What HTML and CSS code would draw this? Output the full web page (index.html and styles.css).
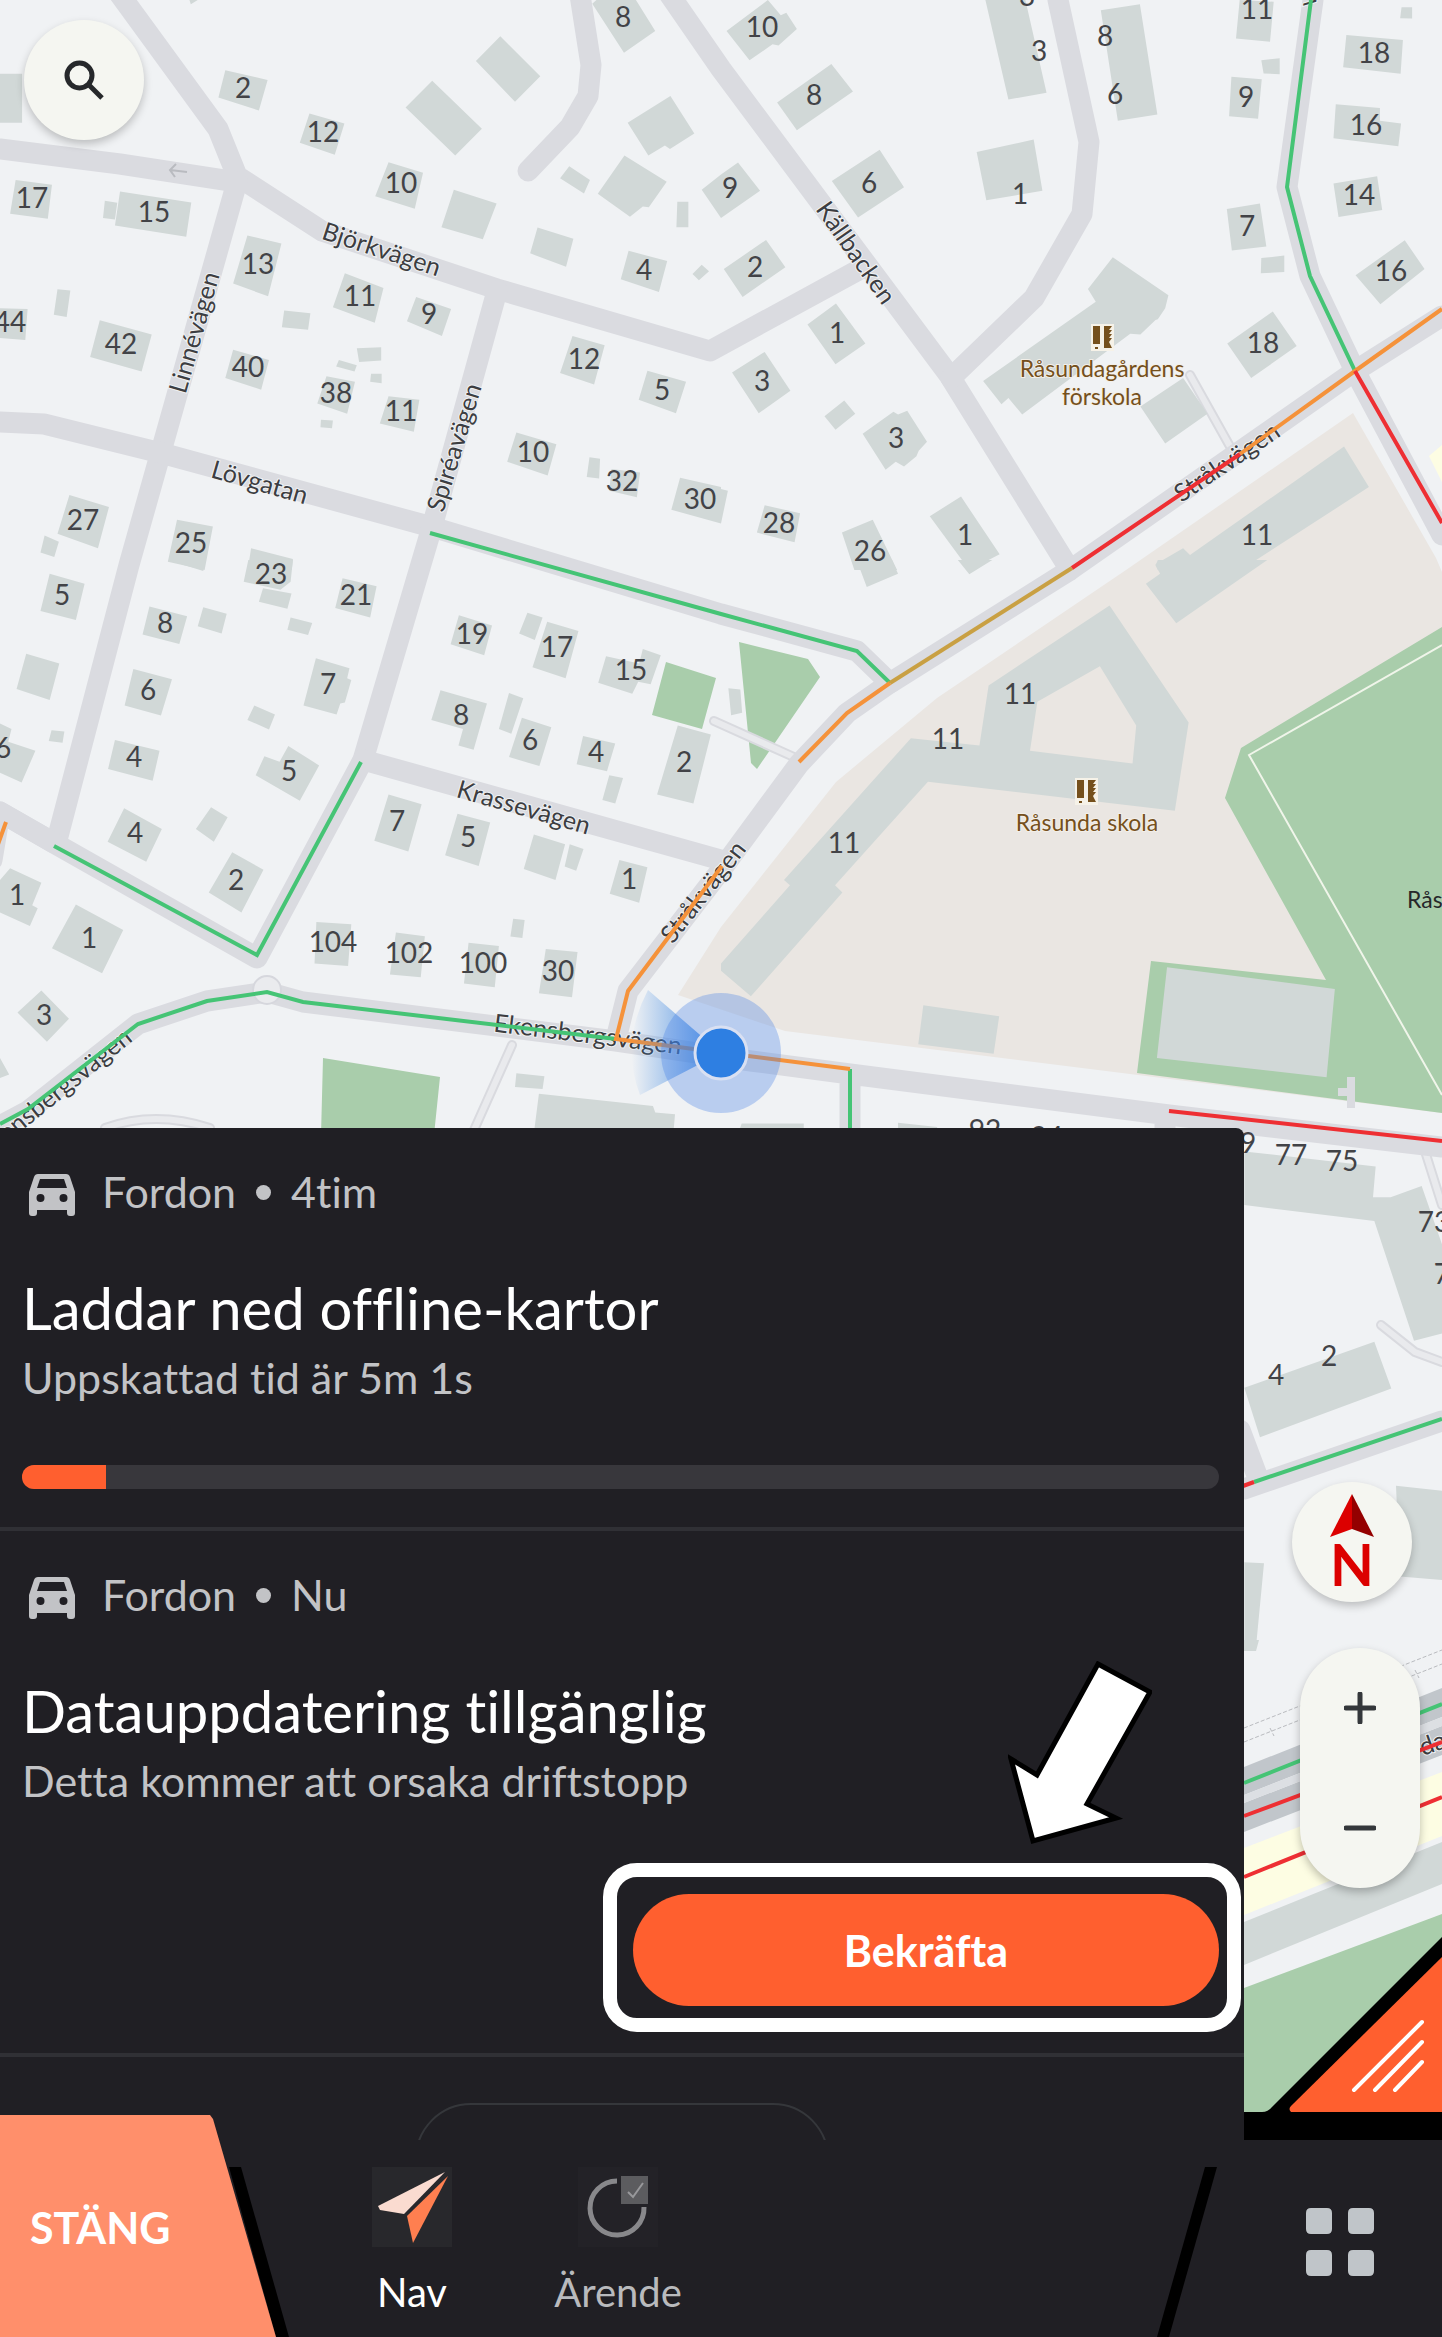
FILE: index.html
```html
<!DOCTYPE html>
<html lang="sv">
<head>
<meta charset="utf-8">
<meta name="viewport" content="width=device-width, initial-scale=1">
<title>Nav</title>
<link rel="stylesheet" href="styles.css">
</head>
<body>
<div class="app">
<main class="stage">
<svg class="map" viewBox="0 0 1442 2112" preserveAspectRatio="xMinYMin slice" role="img" aria-label="Karta">
  <defs>
    <linearGradient id="beam" x1="1" x2="0" y1="0" y2="0"><stop offset="0" stop-color="#2f7fe0" stop-opacity=".9"/><stop offset="1" stop-color="#2f7fe0" stop-opacity="0"/></linearGradient>
  </defs>
  <!-- land use -->
  <path class="school" d="M1353 413L1436 558L1442 572V1113L785 1031L678 995L721 927L836 782L937 698L1126 570Z"/>
  <path class="park" d="M1442 627L1241 748L1225 798L1326 980L1151 961L1137 1073L1442 1113Z"/>
  <path class="park" d="M323 1058L440 1077L434 1135H321ZM739 642L808 659L820 677L757 769L751 763ZM666 662L716 678L702 729L652 715Z"/>
  <path class="park" d="M1244 1988L1442 1914V2112H1244Z"/>
  <path class="yellow" d="M1442 445L1429 456L1442 482ZM1244 1848L1442 1772V1836L1244 1915Z"/>
  <path class="pitchline" d="M1442 645L1249 755L1442 1095"/>
  <!-- footpaths -->
  <path class="path-edge" d="M714 721L796 758M512 1045L474 1130M1190 375L1232 450M105 1128Q155 1110 210 1128M1381 1325L1415 1352L1442 1362M1424 1148L1442 1205"/>
  <path class="path-fill" d="M714 721L796 758M512 1045L474 1130M1190 375L1232 450M105 1128Q155 1110 210 1128M1381 1325L1415 1352L1442 1362M1424 1148L1442 1205"/>
  <path class="road narrow" d="M1351 1077V1108M1338 1092H1350"/>
  <!-- streets -->
  <g class="road">
    <path d="M118 -8L218 129L237 176L322 231L497 289L710 351L864 267"/>
    <path d="M0 149L120 164L237 182L129 565L57 840"/>
    <path d="M0 422L44 424L161 453L432 527L721 614L857 651L890 683"/>
    <path d="M497 291L432 527L363 760L257 958L54 843L0 812"/>
    <path d="M54 843L0 812L-8 860M363 760L721 860"/>
    <path d="M580 -5L591 65L588 96L570 127L528 171"/>
    <path d="M665 -12L721 69L949 375L1070 570"/>
    <path d="M1058 0L1089 142L1082 214L1034 298L951 378"/>
    <path d="M1313 0L1287 187L1310 276L1355 371L1442 535"/>
    <path d="M1442 316L1355 371L1070 570L890 683L847 713L799 764L721 870L628 991L616 1039"/>
    <path d="M0 1126L28 1111L138 1024L207 1001L267 992L303 1002L616 1041L751 1061L850 1074L1169 1115L1442 1147M850 1074V1135M1165 1115V1135"/>
    <path d="M1244 1489L1442 1421M1240 1430L1258 1478"/>
  </g>
  <circle class="roundabout" cx="267" cy="990" r="14"/>
  <!-- railway -->
  <path class="rail-band" d="M1244 1767L1442 1688V1717L1244 1795ZM1244 1803L1442 1726V1755L1244 1832Z"/>
  <path class="rail-gap" d="M1244 1795L1442 1717V1726L1244 1803Z"/>
  <path class="rail-dash" d="M1244 1728L1442 1650M1244 1742L1442 1664M1270 1728L1274 1736M1415 1670L1419 1678"/>
  <!-- buildings, one nested sheet per map tile -->
  <svg class="buildings" width="721" height="570" viewBox="0 0 1568 1568" preserveAspectRatio="none"><path d="M0 203H48V338H0ZM412 0H430L415 12ZM490 193L582 220L563 304L475 268ZM673 312L749 340L728 426L652 393ZM845 446L920 475L902 574L816 540ZM987 522L1080 560L1050 658L960 625ZM940 222L1048 354L990 428L882 296ZM1088 100L1175 210L1120 280L1035 168ZM1297 0H1383L1425 85L1357 145L1288 10ZM1458 264L1510 367L1457 410L1446 400L1410 428L1365 338ZM1358 428L1450 500L1411 570L1398 568L1370 596L1300 533ZM1238 457L1283 495L1270 532L1218 490ZM1473 555H1497V625H1471ZM1568 480L1526 522L1568 600ZM1169 626L1247 657L1231 734L1153 697ZM1367 690L1451 718L1433 803L1350 768ZM1526 728L1542 746L1520 771L1506 754ZM34 495L113 508L104 602L22 588ZM261 527L416 557L405 651L250 620ZM228 552L255 558L250 604L224 600ZM538 648L612 670L583 815L507 780ZM750 752L834 792L815 888L724 845ZM905 817L981 850L961 924L885 884ZM125 796L153 799L145 872L117 866ZM0 848L60 850L55 935L0 930ZM217 881L330 920L308 1022L196 982ZM618 854L675 862L670 907L613 900ZM507 962L585 990L568 1072L490 1040ZM776 958L829 955V992L781 996ZM737 990L776 1005L771 1022L731 1008ZM807 1028H830V1054L805 1050ZM710 1035L772 1050L755 1138L690 1110ZM698 1155L724 1157L722 1178L697 1175ZM845 1090L912 1100L900 1188L826 1165ZM1245 924L1315 950L1292 1058L1218 1026ZM1408 1020L1492 1050L1470 1137L1389 1100ZM1123 1190L1210 1222L1191 1308L1103 1270ZM1282 1258L1305 1262L1303 1316L1276 1312ZM1330 1290L1392 1300L1385 1368L1325 1350ZM1479 1314L1568 1340V1440L1460 1402ZM151 1362L237 1395L213 1508L125 1468ZM97 1473L128 1490L118 1532L88 1520ZM385 1430L463 1448L445 1568L365 1545ZM546 1508L637 1538L632 1600H535Z"/></svg>
  <svg class="buildings" x="721" width="721" height="570" viewBox="0 0 1568 1568" preserveAspectRatio="none"><path d="M102 0L130 42L142 35L165 80L125 125L112 122L62 166L12 85ZM240 176L287 252L165 358L122 282ZM37 447L85 525L0 600V480ZM345 412L398 515L298 598L241 498ZM98 660L140 735L47 817L6 740ZM575 0H662L708 255L625 274ZM826 28L911 12L949 315L863 332ZM1128 0L1202 5L1194 115L1120 106ZM1480 20H1503V51L1477 50ZM1360 96L1483 110L1478 203L1353 185ZM1175 166L1215 160V204L1180 202ZM1110 211L1176 218L1168 327L1105 320ZM1337 287L1433 297V332L1479 340L1473 402L1332 380ZM1332 505L1427 485L1438 578L1343 597ZM1100 575L1172 560L1186 678L1111 689ZM1175 710L1225 703V748L1174 752ZM1487 661L1530 740L1434 837L1380 757ZM1200 857L1252 952L1153 1040L1101 945ZM556 418L680 384L699 525L577 551ZM852 708L973 812L966 848L950 878L945 880L912 920L890 918L655 1140L625 1095L610 1112L570 1048L815 830L798 795ZM250 835L314 945L249 1002L188 893ZM95 968L151 1075L82 1137L24 1025ZM268 1102L292 1138L249 1182L225 1145ZM375 1133L385 1140L405 1130L448 1215L430 1240L425 1255L398 1283L380 1270L358 1292L308 1193ZM95 1390L172 1412L160 1492L78 1465ZM0 1345L15 1350L0 1440ZM330 1430L383 1568H290L263 1465ZM522 1366L606 1525L540 1568L454 1420ZM1005 1040L1058 1138L966 1220L912 1118ZM1355 1228L1409 1340L1130 1568H950L945 1552L1005 1508L1020 1527Z"/></svg>
  <svg class="buildings" y="560" width="721" height="570" viewBox="0 0 1568 1568" preserveAspectRatio="none"><path d="M365 0H447L442 30ZM108 38L184 65L165 165L88 140ZM325 128L407 155L390 231L310 205ZM442 130L493 148L482 202L430 182ZM540 0H637L632 60L610 82L530 60ZM572 78L634 92L625 134L563 115ZM632 158L679 173L670 206L625 192ZM745 50L819 72L805 158L729 132ZM57 258L129 285L108 385L36 355ZM290 300L374 328L350 428L271 400ZM687 270L760 298L755 325L764 330L750 392L740 395L732 425L660 400ZM998 152L1070 180L1053 262L980 232ZM1147 145L1180 158L1163 220L1129 202ZM1190 170L1258 195L1230 325L1158 295ZM1318 265L1390 285L1398 245L1437 262L1415 342L1388 335L1375 368L1301 338ZM958 358L1059 395L1030 522L997 510L1007 465L938 440ZM1107 366L1138 380L1112 478L1085 465ZM1135 434L1199 460L1173 567L1107 542ZM1268 484L1338 505L1320 581L1254 562ZM1474 455L1546 480L1508 670L1429 645ZM1325 592L1355 600L1338 670L1310 660ZM553 400L598 425L585 466L538 440ZM0 450L25 465L18 500L77 525L47 612L0 585ZM112 468L140 472L136 503L106 498ZM250 495L347 525L332 607L235 575ZM627 512L694 565L652 662L556 592L575 540L608 555ZM270 683L352 740L318 830L234 775ZM459 680L495 708L465 775L426 740ZM845 645L917 672L888 802L814 772ZM995 698L1066 722L1041 842L968 812ZM1161 755L1229 782L1208 880L1139 850ZM1239 782L1269 795L1253 855L1228 843ZM1347 825L1408 845L1390 943L1326 918ZM505 804L573 852L525 970L454 915ZM22 848L90 888L70 950L82 958L65 1007L0 970V880ZM165 948L268 1018L222 1137L113 1068ZM688 996L764 1002L757 1117L684 1110ZM861 1025L924 1035L915 1148L848 1140ZM1116 987L1141 990L1136 1040L1110 1036ZM1019 1053L1085 1062L1076 1175L1009 1165ZM1187 1070L1256 1078L1244 1203L1172 1192ZM90 1184L150 1262L102 1325L38 1245ZM0 1370L20 1415L0 1425ZM1123 1412L1184 1420L1180 1455L1120 1450ZM1172 1468L1420 1502L1425 1520L1468 1525L1465 1568H1162Z"/></svg>
  <svg class="buildings" x="721" y="560" width="721" height="570" viewBox="0 0 1568 1568" preserveAspectRatio="none"><path d="M295 0H372L385 38L317 74ZM515 0H590L540 39ZM950 0H1188L990 174L924 65L955 38L945 15ZM16 353L42 356L46 420L22 427ZM845 125L1017 447L987 690L450 610L248 895L264 915L65 1200L0 1130V1110L150 895L137 880L413 490L562 510L582 345ZM824 292L688 390L672 525L895 560L903 455ZM440 1225L605 1255L593 1358L429 1332ZM970 1120L1335 1180L1317 1423L948 1370ZM45 1550H180V1568H40ZM385 1548L470 1560V1568H385Z" fill-rule="evenodd"/></svg>
  <svg class="buildings" x="1100" y="1080" width="342" height="560" viewBox="0 0 1026 1568" preserveAspectRatio="none"><path d="M433 200L827 242L819 328H872L965 297L1026 460V710L942 730L823 395L433 350ZM433 862L823 733L874 864L480 1000ZM433 1350L492 1353L470 1568H433ZM888 1136L1026 1150V1400L900 1390Z"/></svg>
  <path class="building" d="M1244 1922L1442 1842V1884L1244 1965ZM1244 1640H1259L1256 1651H1244Z"/>
  <!-- one-way arrow -->
  <path class="oneway" d="M187 172L170 170M176 164L170 170L175 177"/>
  <!-- house numbers -->
  <g class="num">
    <text x="623" y="16">8</text><text x="762" y="26">10</text><text x="814" y="94">8</text><text x="1027" y="-5">3</text><text x="1039" y="50">3</text><text x="1105" y="35">8</text><text x="1115" y="93">6</text><text x="1257" y="8">11</text><text x="1246" y="96">9</text><text x="1374" y="52">18</text><text x="1366" y="124">16</text><text x="1359" y="194">14</text><text x="1247" y="225">7</text><text x="1391" y="270">16</text><text x="1263" y="342">18</text><text x="1020" y="193">1</text><text x="869" y="182">6</text><text x="730" y="187">9</text><text x="755" y="266">2</text><text x="644" y="269">4</text><text x="837" y="332">1</text><text x="762" y="380">3</text><text x="896" y="437">3</text><text x="662" y="389">5</text><text x="584" y="358">12</text><text x="533" y="451">10</text><text x="622" y="480">32</text><text x="700" y="498">30</text><text x="779" y="522">28</text><text x="870" y="550">26</text><text x="965" y="534">1</text><text x="1257" y="534">11</text>
    <text x="243" y="87">2</text><text x="323" y="131">12</text><text x="401" y="182">10</text><text x="32" y="197">17</text><text x="154" y="211">15</text><text x="258" y="263">13</text><text x="360" y="295">11</text><text x="429" y="313">9</text><text x="10" y="321">44</text><text x="121" y="343">42</text><text x="248" y="366">40</text><text x="336" y="392">38</text><text x="401" y="410">11</text><text x="83" y="519">27</text><text x="191" y="542">25</text><text x="271" y="573">23</text><text x="356" y="594">21</text><text x="62" y="594">5</text><text x="165" y="622">8</text><text x="472" y="633">19</text><text x="557" y="646">17</text><text x="631" y="669">15</text><text x="148" y="689">6</text><text x="328" y="683">7</text><text x="461" y="714">8</text><text x="530" y="739">6</text><text x="596" y="751">4</text><text x="684" y="761">2</text><text x="134" y="756">4</text><text x="289" y="770">5</text><text x="3" y="747">6</text><text x="1020" y="693">11</text><text x="948" y="738">11</text><text x="844" y="842">11</text><text x="397" y="820">7</text><text x="468" y="836">5</text><text x="629" y="878">1</text><text x="135" y="832">4</text><text x="236" y="879">2</text><text x="17" y="894">1</text><text x="89" y="937">1</text><text x="44" y="1014">3</text><text x="333" y="941">104</text><text x="409" y="952">102</text><text x="483" y="962">100</text><text x="558" y="970">30</text>
    <text x="985" y="1129">92</text><text x="1047" y="1136">94</text><text x="1240" y="1142">79</text><text x="1291" y="1154">77</text><text x="1342" y="1160">75</text><text x="1434" y="1221">73</text><text x="1450" y="1273">71</text><text x="1276" y="1374">4</text><text x="1329" y="1355">2</text>
  </g>
  <!-- street names -->
  <g class="street">
    <text transform="translate(382 248) rotate(18)">Björkvägen</text>
    <text transform="translate(193 332) rotate(-74)">Linnévägen</text>
    <text transform="translate(453 447) rotate(-73)">Spiréavägen</text>
    <text transform="translate(260 481) rotate(16)">Lövgatan</text>
    <text transform="translate(524 806) rotate(16)">Krassevägen</text>
    <text transform="translate(857 252) rotate(55)">Källbacken</text>
    <text transform="translate(1226 461) rotate(-34)">Stråkvägen</text>
    <text transform="translate(702 891) rotate(-52)">Stråkvägen</text>
    <text transform="translate(588 1033) rotate(7)">Ekensbergsvägen</text>
    <text transform="translate(54 1092) rotate(-39)">Ekensbergsvägen</text>
    <text transform="translate(1307 -6) rotate(-85)">vä</text>
    <text transform="translate(1438 1740) rotate(-20)">dav</text>
  </g>
  <g class="poi">
    <text x="1102" y="368">Råsundagårdens</text><text x="1102" y="396">förskola</text><text x="1087" y="822">Råsunda skola</text>
    <g id="book-a"><path class="halo" d="M1091 324H1114V351H1091Z"/><path d="M1093 326H1100V344H1093ZM1095 347H1098V349H1095ZM1104 326H1112L1109 330H1112L1109 334H1112L1109 338H1112L1109 342L1112 348H1104Z"/></g>
    <use href="#book-a" x="-16" y="454"/>
  </g>
  <text class="place" x="1407" y="899">Råsunda IP</text>
  <!-- live traffic -->
  <g class="traffic">
    <path class="free" d="M1311 0L1287 187L1310 276L1355 371M430 533L721 614L857 651L890 683M54 846L257 955L361 762M0 1124L28 1109L138 1024L207 1001L267 992L303 1002L616 1039M850 1069V1130M1254 1482L1442 1419M1244 1783L1442 1704"/>
    <path class="slow" d="M1442 309L1355 371L1240 454M890 683L847 713L799 762M722 866L628 991L616 1039L850 1069M6 822L-4 850"/>
    <path class="mixed" d="M1072 568L890 683"/>
    <path class="jam" d="M1240 454L1072 568M1355 371L1442 523M1169 1111L1442 1141M1243 1486L1254 1482M1244 1816L1442 1742M1244 1877L1442 1797"/>
  </g>
  <!-- current position -->
  <path d="M721 1053L648 990Q620 1043 640 1095Z" fill="url(#beam)"/>
  <circle cx="721" cy="1053" r="60" fill="#4a82e6" fill-opacity=".33"/>
  <circle cx="721" cy="1053" r="26" fill="#2e7fe2" stroke="#d9e0f2" stroke-width="3"/>
</svg>

<button class="round search" type="button" aria-label="Sök"><svg viewBox="0 0 40 40" width="40" height="40"><circle cx="15.500" cy="15.500" r="12.500"/><path d="M25 25L38 38"/></svg></button>

<section class="panel" aria-label="Aviseringar">
  <article class="notice">
    <header class="meta"><svg class="car" viewBox="0 0 48 42" width="48" height="42"><path fill-rule="evenodd" d="M10 0H38Q41 0 42 3L47 18V39Q47 42 44 42H42Q39 42 39 39V36H9V39Q9 42 6 42H4Q1 42 1 39V18L6 3Q7 0 10 0ZM12 5L9 14H39L36 5ZM12.500 20A4 4 0 1 0 12.500 28A4 4 0 1 0 12.500 20ZM35.500 20A4 4 0 1 0 35.500 28A4 4 0 1 0 35.500 20Z"/></svg><span>Fordon</span><i class="dot"></i><span>4tim</span></header>
    <h2>Laddar ned offline-kartor</h2>
    <p>Uppskattad tid är 5m 1s</p>
    <progress value="7" max="100" aria-label="Laddar ned offline-kartor"></progress>
  </article>
  <article class="notice update">
    <header class="meta"><svg class="car" viewBox="0 0 48 42" width="48" height="42"><path fill-rule="evenodd" d="M10 0H38Q41 0 42 3L47 18V39Q47 42 44 42H42Q39 42 39 39V36H9V39Q9 42 6 42H4Q1 42 1 39V18L6 3Q7 0 10 0ZM12 5L9 14H39L36 5ZM12.500 20A4 4 0 1 0 12.500 28A4 4 0 1 0 12.500 20ZM35.500 20A4 4 0 1 0 35.500 28A4 4 0 1 0 35.500 20Z"/></svg><span>Fordon</span><i class="dot"></i><span>Nu</span></header>
    <h2>Datauppdatering tillgänglig</h2>
    <p>Detta kommer att orsaka driftstopp</p>
    <div class="highlight">
      <svg class="pointer" viewBox="0 0 144 184" width="144" height="184" aria-hidden="true"><path d="M90 3L142 31L79 143L108 157L25 180L3 98L29 114Z"/></svg>
      <button class="confirm" type="button">Bekräfta</button>
    </div>
  </article>
  <div class="more"><div class="pill"></div></div>
</section>

<aside class="controls">
  <button class="round compass" type="button" aria-label="Norr upp"><svg viewBox="0 0 44 44" width="44" height="44"><path fill="#dc0000" d="M22 0L22 35L0 43Z"/><path fill="#940000" d="M22 0L44 43L22 35Z"/></svg><span>N</span></button>
  <div class="zoom">
    <button type="button" aria-label="Zooma in"><svg viewBox="0 0 32 32" width="32" height="32"><path d="M16 2V30M2 16H30"/></svg></button>
    <button type="button" aria-label="Zooma ut"><svg viewBox="0 0 32 32" width="32" height="32"><path d="M2 16H30"/></svg></button>
  </div>
  <button class="corner" type="button" aria-label="Verktyg"><svg viewBox="0 0 180 175" width="180" height="175"><path fill="#000" d="M180 0V175H0Q6 175 10 170Z"/><path fill="#ff5f2f" d="M180 20V175H29Q26 172 29 169Z"/><path class="strokes" d="M92 153L160 85M113 153L160 105M133 153L160 125"/></svg></button>
</aside>
</main>

<nav class="bar">
  <button class="close" type="button">STÄNG</button>
  <i class="slash left"></i>
  <a class="tab active" href="#nav"><svg viewBox="0 0 80 80" width="80" height="80"><path fill="#fadbd0" d="M73 5L6 39L8 43L32 47Z"/><path fill="#ff7f50" d="M76 9L35 49L41 76Z"/></svg>Nav</a>
  <a class="tab" href="#arende"><svg viewBox="0 0 80 80" width="80" height="80"><path class="ring" d="M39 14A27 27 0 1 0 66 40"/><path fill="#5c5c5f" d="M43 9H70V37H43Z"/><path class="tick" d="M50 25L55 30L65 16"/></svg>Ärende</a>
  <i class="slash right"></i>
  <button class="apps" type="button" aria-label="Appar"><svg viewBox="0 0 68 68" width="68" height="68"><path d="M5 0H21Q26 0 26 5V21Q26 26 21 26H5Q0 26 0 21V5Q0 0 5 0ZM47 0H63Q68 0 68 5V21Q68 26 63 26H47Q42 26 42 21V5Q42 0 47 0ZM5 42H21Q26 42 26 47V63Q26 68 21 68H5Q0 68 0 63V47Q0 42 5 42ZM47 42H63Q68 42 68 47V63Q68 68 63 68H47Q42 68 42 63V47Q42 42 47 42Z"/></svg></button>
</nav>
</div>
</body>
</html>
```
FILE: styles.css
```css
* { box-sizing: border-box; }
body {
  margin: 0;
  background: #201f24;
  font-family: Lato, "Liberation Sans", sans-serif;
  font-variant-ligatures: none;
}
button { border: 0; padding: 0; margin: 0; font: inherit; background: none; cursor: pointer; }
button svg, .car, .tab svg { display: block; }

.app { display: flex; flex-direction: column; min-height: 100vh; }

/* Map stage with overlays */
.stage {
  position: relative;
  flex: 1;
  display: grid;
  grid-template-columns: minmax(0, 1fr) 198px;
  grid-template-rows: 1fr auto;
  background: #000;
  overflow: hidden;
}
.map {
  position: absolute;
  top: 0;
  left: 0;
  width: 100%;
  height: calc(100% - 28px);
  background: #f0f2f4;
}
.school { fill: #eae6e2; }
.park { fill: #a9cdab; }
.yellow { fill: #fdfde3; }
.buildings, .building { fill: #d1d8d7; }
.pitchline { fill: none; stroke: #f0f5ea; stroke-width: 2; }
.road { fill: none; stroke: #dadbe0; stroke-width: 21; stroke-linecap: round; stroke-linejoin: round; }
.road.narrow { stroke-width: 8; stroke-linecap: butt; }
.path-edge { fill: none; stroke: #d9dadf; stroke-width: 10; stroke-linecap: round; }
.path-fill { fill: none; stroke: #e9eaed; stroke-width: 6; stroke-linecap: round; }
.roundabout { fill: #eaebee; stroke: #d6d7dd; stroke-width: 2; }
.rail-band { fill: #c1c6cb; }
.rail-gap { fill: #dcdfe3; }
.rail-dash { fill: none; stroke: #b9bbbf; stroke-width: 1; stroke-dasharray: 4 2; }
.oneway { fill: none; stroke: #b9bbc0; stroke-width: 2; }
.map text { dominant-baseline: central; text-anchor: middle; }
.num { font-size: 28px; fill: #424347; }
.street { font-size: 25px; fill: #3c3d41; }
.street text { paint-order: stroke; stroke: #f0f2f4; stroke-width: 2px; }
.poi { font-size: 23px; fill: #75501c; }
.poi text { paint-order: stroke; stroke: #f3efe8; stroke-width: 2px; }
.poi .halo { fill: #f6f2e8; }
.map .place { font-size: 23px; fill: #26272a; text-anchor: start; }
.traffic { fill: none; stroke-width: 4; }
.free { stroke: #45c475; }
.slow { stroke: #f5923a; }
.mixed { stroke: #c9a043; }
.jam { stroke: #ee2f33; }

/* Floating buttons */
.round {
  position: relative;
  width: 120px;
  height: 120px;
  border-radius: 60px;
  background: #f5f6f1;
  box-shadow: 0 4px 8px rgba(0, 0, 0, .22);
  display: flex;
  flex-direction: column;
  align-items: center;
  justify-content: center;
}
.search { margin: 20px 24px; }
.search svg { fill: none; stroke: #26282b; stroke-width: 5; }
.controls {
  position: relative;
  grid-column: 2;
  grid-row: 2;
  display: flex;
  flex-direction: column;
  align-items: flex-end;
  padding: 354px 22px 28px 0;
}
.compass { margin-right: 8px; color: #dc0000; font-size: 57px; line-height: 52px; font-weight: 700; }
.zoom {
  margin-top: 46px;
  width: 120px;
  border-radius: 60px;
  background: #f5f6f1;
  box-shadow: 0 4px 8px rgba(0, 0, 0, .25);
}
.zoom button { display: grid; place-items: center; width: 120px; height: 120px; }
.zoom svg { fill: none; stroke: #34373b; stroke-width: 5; stroke-linecap: round; }
.corner { margin: auto -22px 0 0; }
.strokes { stroke: #fff; stroke-width: 4; fill: none; stroke-linecap: round; }

/* Notifications */
.panel {
  position: relative;
  grid-column: 1;
  grid-row: 2;
  background: #201f24;
  border-top-right-radius: 8px;
  color: #c2c3c6;
}
.notice { padding: 38px 25px 38px 22px; border-bottom: 4px solid #303035; }
.notice.update { padding-bottom: 21px; }
.meta { display: flex; align-items: center; font-size: 43px; line-height: 52px; }
.car { fill: #c2c3c6; margin: 6px 26px 0 6px; }
.dot { width: 15px; height: 15px; border-radius: 8px; background: #c2c3c6; margin: 0 20px; }
.notice h2 { margin: 55px 0 9px; font-size: 58px; line-height: 70px; font-weight: 400; color: #fff; }
.notice p { margin: 0; font-size: 43px; line-height: 52px; }
progress {
  display: block;
  width: 100%;
  height: 24px;
  margin-top: 61px;
  border: 0;
  border-radius: 12px;
  overflow: hidden;
  appearance: none;
  background: #38373c;
}
progress::-webkit-progress-bar { background: #38373c; }
progress::-webkit-progress-value { background: #ff5f2f; }
.highlight {
  position: relative;
  width: min(100%, 638px);
  margin: 56px -22px 0 auto;
  padding: 17px 8px 12px 16px;
  border: 14px solid #fff;
  border-radius: 34px;
}
.pointer { position: absolute; left: 391px; top: -216px; }
.pointer path { fill: #fff; stroke: #000; stroke-width: 5; }
.confirm {
  display: block;
  width: 100%;
  height: 112px;
  border-radius: 56px;
  background: #ff5f2f;
  color: #fff;
  font-size: 43px;
  font-weight: 700;
}
.more { height: 83px; padding-top: 46px; overflow: hidden; }
.pill { width: 414px; height: 112px; margin: 0 auto; border: 2px solid #35373b; border-radius: 56px; }

/* Bottom bar */
.bar { display: flex; height: 197px; background: #201f24; }
.close {
  position: relative;
  z-index: 1;
  width: 276px;
  height: 222px;
  margin-top: -25px;
  padding: 2px 0 0 30px;
  text-align: left;
  font-size: 43px;
  font-weight: 700;
  color: #fff;
  background: #ff8f6b;
  clip-path: polygon(0 0, 210px 0, 213px 4px, 100% 100%, 0 100%);
}
.slash { width: 60px; margin-top: 27px; background: #000; }
.slash.left { margin-left: -47px; margin-right: 20px; clip-path: polygon(0 0, 12px 0, 100% 100%, 47px 100%); }
.slash.right { margin-left: auto; clip-path: polygon(48px 0, 100% 0, 12px 100%, 0 100%); }
.tab {
  width: 206px;
  padding-top: 27px;
  display: flex;
  flex-direction: column;
  align-items: center;
  gap: 21px;
  color: #b9babd;
  font-size: 40px;
  line-height: 48px;
  text-decoration: none;
}
.tab svg { background: #232227; }
.tab.active { color: #fff; }
.tab.active svg { background: #28282c; }
.ring { fill: none; stroke: #88888b; stroke-width: 5; }
.tick { fill: none; stroke: #98989b; stroke-width: 2; }
.apps { width: 225px; padding-left: 20px; display: grid; place-items: center; fill: #c0c5c9; }
.apps svg { margin-top: 6px; }
```
